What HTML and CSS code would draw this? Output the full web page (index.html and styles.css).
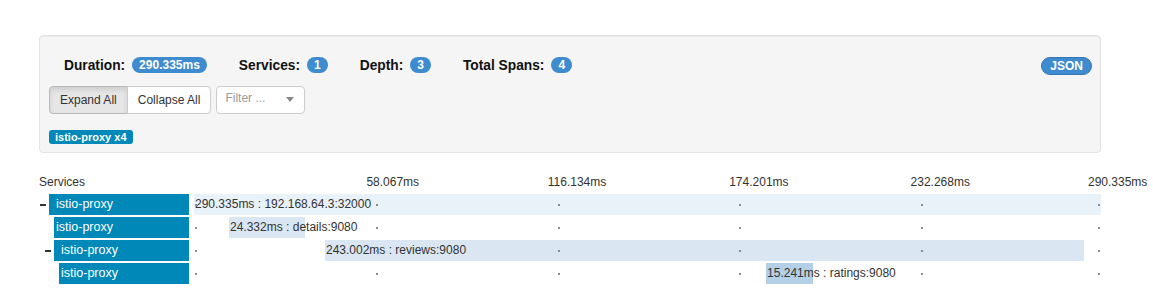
FILE: index.html
```html
<!DOCTYPE html>
<html>
<head>
<meta charset="utf-8">
<link rel="stylesheet" href="styles.css">
</head>
<body>
<div class="page">
  <div class="panel">
    <div class="summary">
      <div class="stats">
        <span class="stat"><b class="stat-label">Duration:</b><span class="badge">290.335ms</span></span>
        <span class="stat"><b class="stat-label">Services:</b><span class="badge">1</span></span>
        <span class="stat"><b class="stat-label">Depth:</b><span class="badge">3</span></span>
        <span class="stat"><b class="stat-label">Total Spans:</b><span class="badge">4</span></span>
      </div>
      <span class="json-btn">JSON</span>
    </div>
    <div class="controls">
      <div class="btn-group">
        <button class="btn active">Expand All</button>
        <button class="btn">Collapse All</button>
      </div>
      <div class="filter">
        <span class="placeholder">Filter ...</span>
        <svg class="caret" width="8" height="5" viewBox="0 0 8 5"><path d="M0 0 H8 L4 5 Z" fill="#8a8a8a"/></svg>
      </div>
    </div>
    <div class="tags"><span class="service-tag">istio-proxy x4</span></div>
  </div>

  <div class="trace">
    <div class="trace-head">
      <div class="name-col head-name">Services</div>
      <div class="scale">
        <span class="tick-label">58.067ms</span>
        <span class="tick-label">116.134ms</span>
        <span class="tick-label">174.201ms</span>
        <span class="tick-label">232.268ms</span>
        <span class="tick-label last">290.335ms</span>
      </div>
    </div>

    <div class="row">
      <div class="name-col depth-0"><span class="toggle"><i class="toggle-icon"></i></span><span class="svc parent">istio-proxy</span></div>
      <div class="timeline">
        <div class="span shade-1" style="left:0%;width:100%">290.335ms : 192.168.64.3:32000</div>
        <i class="dot t0"></i><i class="dot t1"></i><i class="dot t2"></i><i class="dot t3"></i><i class="dot t4"></i><i class="dot t5"></i>
      </div>
    </div>

    <div class="row">
      <div class="name-col depth-1"><span class="toggle"></span><span class="svc">istio-proxy</span></div>
      <div class="timeline">
        <div class="span shade-2" style="left:3.86%;width:8.38%">24.332ms : details:9080</div>
        <i class="dot t0"></i><i class="dot t1"></i><i class="dot t2"></i><i class="dot t3"></i><i class="dot t4"></i><i class="dot t5"></i>
      </div>
    </div>

    <div class="row">
      <div class="name-col depth-1"><span class="toggle"><i class="toggle-icon"></i></span><span class="svc parent">istio-proxy</span></div>
      <div class="timeline">
        <div class="span shade-2" style="left:14.44%;width:83.7%">243.002ms : reviews:9080</div>
        <i class="dot t0"></i><i class="dot t1"></i><i class="dot t2"></i><i class="dot t3"></i><i class="dot t4"></i><i class="dot t5"></i>
      </div>
    </div>

    <div class="row">
      <div class="name-col depth-2"><span class="toggle"></span><span class="svc">istio-proxy</span></div>
      <div class="timeline">
        <div class="span shade-3" style="left:63.07%;width:5.18%">15.241ms : ratings:9080</div>
        <i class="dot t0"></i><i class="dot t1"></i><i class="dot t2"></i><i class="dot t3"></i><i class="dot t4"></i><i class="dot t5"></i>
      </div>
    </div>
  </div>
</div>
</body>
</html>
```

FILE: styles.css
```css
html, body {
  margin: 0;
  background: #fff;
}
body {
  font-family: "Liberation Sans", Arial, sans-serif;
  color: #333;
  font-size: 12px;
}
.page {
  padding: 35px 52px 0 39px;
}

/* ---------- summary panel ---------- */
.panel {
  background: #f5f5f5;
  border: 1px solid #e3e3e3;
  border-radius: 4px;
  box-shadow: inset 0 1px 1px rgba(0, 0, 0, 0.05);
  padding: 20px 8px 8px 9px;
}
.summary {
  display: flex;
  align-items: center;
  justify-content: space-between;
  height: 18px;
}
.stats {
  display: flex;
  align-items: center;
  gap: 32px;
  padding-left: 15px;
}
.stat {
  display: flex;
  align-items: center;
  gap: 7px;
}
.stat-label {
  font-weight: bold;
  font-size: 13.75px;
  color: #111;
}
.badge {
  display: inline-block;
  background: #3f8bd0;
  color: #fff;
  font-weight: bold;
  font-size: 12px;
  height: 16px;
  line-height: 16px;
  padding: 0 7px;
  border-radius: 10px;
}
.json-btn {
  display: inline-block;
  box-sizing: border-box;
  background: #3f8bd0;
  border: 1px solid #3575b3;
  color: #fff;
  font-weight: bold;
  font-size: 12px;
  height: 18px;
  line-height: 16px;
  padding: 0 8px;
  border-radius: 9px;
  margin-top: 1px;
}

.controls {
  display: flex;
  gap: 5px;
  margin-top: 12px;
}
.btn-group {
  display: flex;
}
.btn {
  font-family: "Liberation Sans", Arial, sans-serif;
  font-size: 12px;
  color: #333;
  height: 28px;
  padding: 0 10px;
  border: 1px solid #ccc;
  background: #fff;
  margin: 0;
}
.btn:first-child {
  border-radius: 4px 0 0 4px;
}
.btn:last-child {
  border-radius: 0 4px 4px 0;
  margin-left: -1px;
}
.btn.active {
  background: #e6e6e6;
  border-color: #b9b9b9;
  box-shadow: inset 0 3px 5px rgba(0, 0, 0, 0.1);
}
.filter {
  box-sizing: border-box;
  width: 89px;
  height: 28px;
  background: #fff;
  border: 1px solid #ccc;
  border-radius: 4px;
  display: flex;
  align-items: center;
  justify-content: space-between;
  padding: 0 10px 5px 8px;
}
.placeholder {
  color: #9a9a9a;
  font-size: 12px;
}
.caret {
  margin-top: 4px;
}
.tags {
  margin-top: 16px;
  height: 14px;
}
.service-tag {
  display: inline-block;
  background: #0088b9;
  color: #fff;
  font-weight: bold;
  font-size: 11px;
  height: 14px;
  line-height: 14px;
  padding: 0 6px;
  border-radius: 3px;
}

/* ---------- trace ---------- */
.trace {
  margin-top: 22px;
}
.trace-head {
  display: flex;
  height: 14px;
  line-height: 14px;
  margin-bottom: 5px;
}
.name-col {
  width: 150px;
  flex: none;
  box-sizing: border-box;
  display: flex;
}
.head-name {
  display: block;
}
.scale {
  flex: 1;
  margin-left: 5px;
  display: grid;
  grid-template-columns: repeat(4, 181.4px) auto;
  padding-left: 172.4px;
  white-space: nowrap;
}
.tick-label.last {
  margin-left: -4px;
}

.row {
  display: flex;
  height: 21px;
  margin-bottom: 2px;
}
.depth-0 { padding-left: 0; }
.depth-1 { padding-left: 5px; }
.depth-2 { padding-left: 10px; }
.toggle {
  width: 10px;
  flex: none;
  display: flex;
  align-items: center;
  padding-left: 1px;
  box-sizing: border-box;
}
.toggle-icon {
  display: block;
  width: 6px;
  height: 2px;
  background: #333;
}
.svc {
  flex: 1;
  background: #0088b9;
  color: #fff;
  font-size: 12.5px;
  line-height: 21px;
  padding-left: 2px;
  white-space: nowrap;
}
.svc.parent {
  padding-left: 7px;
}
.timeline {
  position: relative;
  flex: 1;
  margin-left: 5px;
}
.span {
  position: absolute;
  top: 0;
  bottom: 0;
  box-sizing: border-box;
  padding-left: 1px;
  line-height: 21px;
  font-size: 12px;
  white-space: nowrap;
  color: #333;
}
.shade-1 { background: #e9f1f9; }
.shade-2 { background: #dae7f2; }
.shade-3 { background: #b3d0e7; }
.dot {
  position: absolute;
  top: 10px;
  width: 2px;
  height: 2px;
  background: #8c8c8c;
  z-index: 1;
}
.t0 { left: 1px; }
.t1 { left: calc(20% + 1px); }
.t2 { left: calc(40% + 1px); }
.t3 { left: calc(60% + 1px); }
.t4 { left: calc(80% + 1px); }
.t5 { left: calc(100% - 3px); }
```
